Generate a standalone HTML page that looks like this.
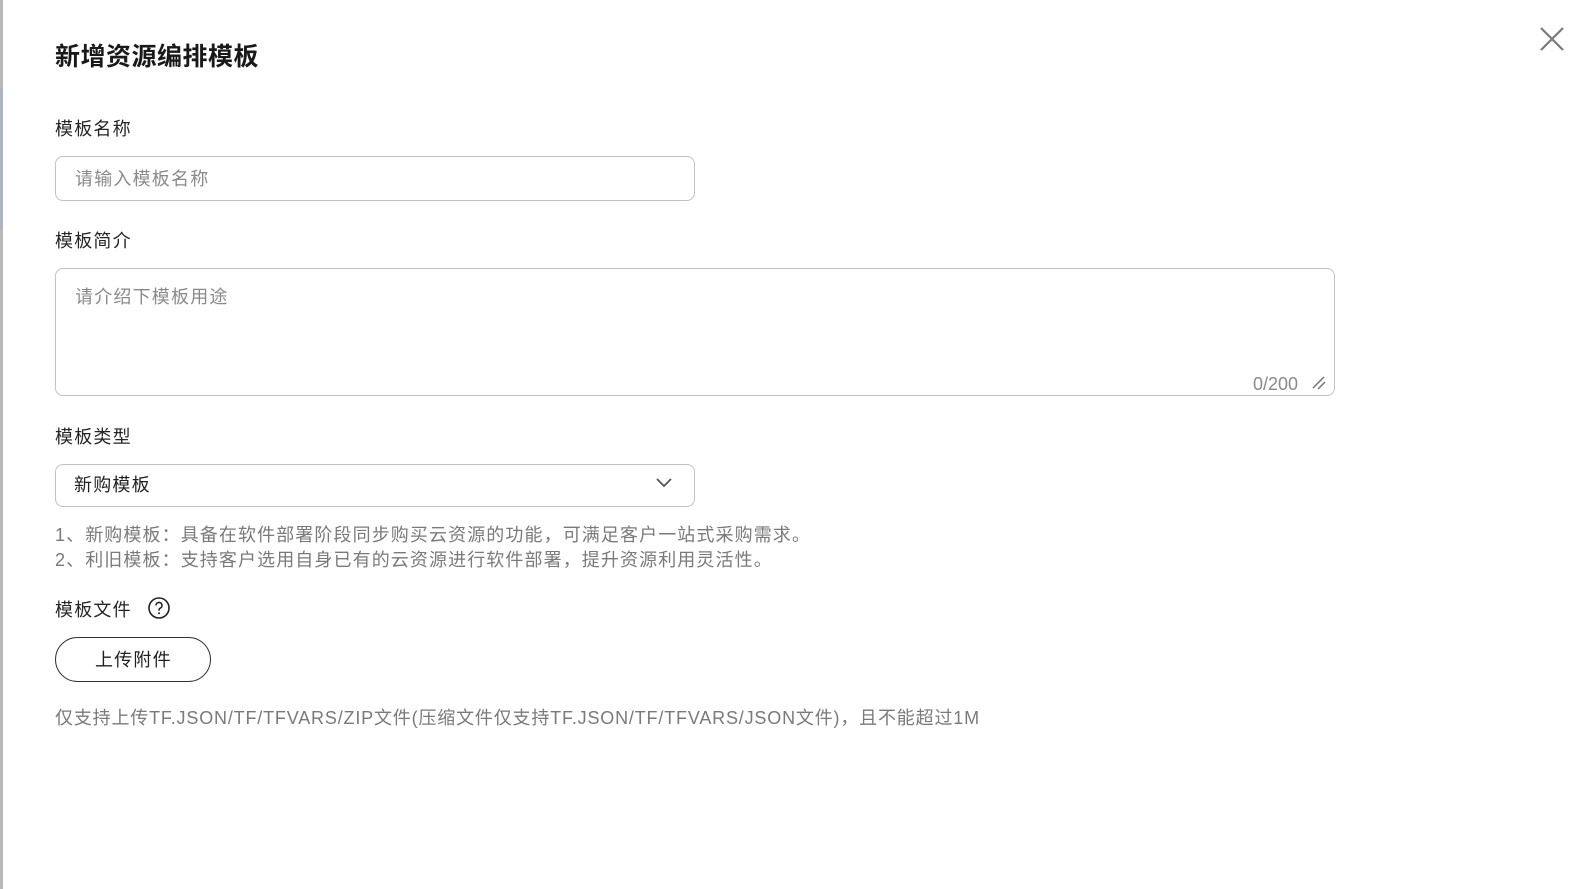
<!DOCTYPE html>
<html><head><meta charset="utf-8"><style>
*{margin:0;padding:0;box-sizing:border-box}
body{width:1595px;height:889px;background:#fff;position:relative;overflow:hidden;font-family:"Liberation Sans","Noto Sans CJK SC",sans-serif;color:#252525}
.a{position:absolute;white-space:nowrap}
.lbl{font-size:18px;letter-spacing:1.2px;line-height:20px}
.box{position:absolute;border:1px solid #c2c2c2;border-radius:8px;background:#fff}
.ph{color:#8a8a8a}
.help{font-size:18px;letter-spacing:1.1px;color:#7a7a7a;line-height:25px}
</style></head><body>
<div class="a" style="left:0;top:0;width:3px;height:889px;background:#b8b8b8"></div>
<div class="a" style="left:0;top:88px;width:3px;height:142px;background:#a9b4c6"></div>

<div class="a" style="left:55px;top:42px;font-size:25px;font-weight:bold;letter-spacing:0.5px;line-height:30px;color:#191919">新增资源编排模板</div>

<svg class="a" style="left:1538px;top:25px" width="28" height="28" viewBox="0 0 28 28"><path d="M3 3L25 25M25 3L3 25" stroke="#7a7a7a" stroke-width="2.2" fill="none"/></svg>

<div class="a lbl" style="left:55px;top:119px">模板名称</div>
<div class="box" style="left:55px;top:156px;width:640px;height:45px"></div>
<div class="a lbl ph" style="left:75px;top:169px">请输入模板名称</div>

<div class="a lbl" style="left:55px;top:231px">模板简介</div>
<div class="box" style="left:55px;top:268px;width:1280px;height:128px"></div>
<div class="a lbl ph" style="left:75px;top:287px">请介绍下模板用途</div>
<div class="a ph" style="left:1253px;top:374px;font-size:18px;line-height:20px">0/200</div>
<svg class="a" style="left:1311px;top:375px" width="16" height="16" viewBox="0 0 16 16"><path d="M2 13L13 2M7 14L14 7" stroke="#777" stroke-width="1.5" fill="none"/></svg>

<div class="a lbl" style="left:55px;top:427px">模板类型</div>
<div class="box" style="left:55px;top:464px;width:640px;height:43px"></div>
<div class="a lbl" style="left:74px;top:475px;color:#1f1f1f">新购模板</div>
<svg class="a" style="left:655px;top:477px" width="18" height="12" viewBox="0 0 18 12"><path d="M2 2L9 9L16 2" stroke="#555" stroke-width="1.8" fill="none"/></svg>

<div class="a help" style="left:55px;top:523px">1、新购模板：具备在软件部署阶段同步购买云资源的功能，可满足客户一站式采购需求。<br>2、利旧模板：支持客户选用自身已有的云资源进行软件部署，提升资源利用灵活性。</div>

<div class="a lbl" style="left:55px;top:600px">模板文件</div>
<svg class="a" style="left:147px;top:596px" width="24" height="24" viewBox="0 0 24 24"><circle cx="12" cy="12" r="10" stroke="#222" stroke-width="1.6" fill="none"/><path d="M9 9.5a3 3 0 1 1 4.2 2.7c-.8.4-1.2 1-1.2 1.8v.6" stroke="#222" stroke-width="1.6" fill="none"/><circle cx="12" cy="17.3" r="1" fill="#222"/></svg>

<div class="a" style="left:55px;top:637px;width:156px;height:45px;border:1px solid #333;border-radius:23px"></div>
<div class="a lbl" style="left:95px;top:650px;color:#1f1f1f">上传附件</div>

<div class="a" style="left:55px;top:707px;font-size:18px;line-height:22px;color:#7a7a7a;letter-spacing:0.82px">仅支持上传TF.JSON/TF/TFVARS/ZIP文件(压缩文件仅支持TF.JSON/TF/TFVARS/JSON文件)，且不能超过1M</div>
</body></html>
